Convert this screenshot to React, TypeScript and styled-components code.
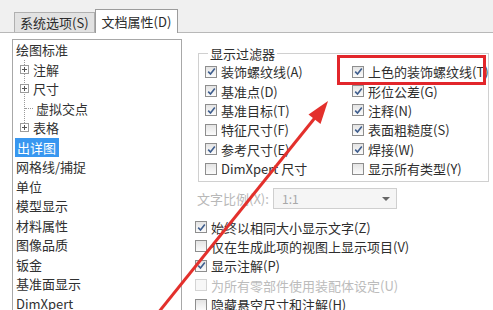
import React from "react";
import styled, { createGlobalStyle } from "styled-components";

const GlobalStyle = createGlobalStyle`
  html, body { margin: 0; padding: 0; background: #ffffff; }
  body {
    font-family: "Noto Sans CJK SC", "Noto Sans", "Liberation Sans", sans-serif;
    font-size: 13px;
    color: #303030;
    overflow: hidden;
  }
`;

const Page = styled.div`
  position: relative;
  width: 493px;
  height: 310px;
  overflow: hidden;
  background: #fff;
`;

const TabStrip = styled.div`
  height: 32px;
  background: #f0f0f0;
  border-bottom: 1px solid #b8b8b8;
  display: flex;
  align-items: flex-end;
  padding-left: 14px;
`;

const Tab = styled.div<{ $active?: boolean }>`
  display: flex;
  align-items: center;
  box-sizing: border-box;
  height: ${(p) => (p.$active ? "24px" : "20px")};
  padding: 0 ${(p) => (p.$active ? "6px" : "5px")};
  background: ${(p) => (p.$active ? "#ffffff" : "#e2e2e2")};
  border: 1px solid ${(p) => (p.$active ? "#9c9c9c" : "#b0b0b0")};
  border-bottom: none;
  margin-bottom: ${(p) => (p.$active ? "-1px" : "0")};
  line-height: 1;
  color: #2a2a2a;
  white-space: nowrap;
`;

const Body = styled.div`
  display: flex;
  align-items: flex-start;
`;

const Tree = styled.div`
  margin: 6px 0 0 12px;
  width: 170px;
  height: 300px;
  box-sizing: border-box;
  border: 1px solid #a8a8a8;
  padding: 0 0 0 2px;
  background: #fff;
  flex-shrink: 0;
`;

const TreeRow = styled.div`
  height: 19.5px;
  display: flex;
  align-items: center;
  white-space: nowrap;
`;

const Children = styled.div`
  margin-left: 9px;
  border-left: 1px dotted #9a9a9a;
  margin-bottom: 9px;
  height: 69px;
  overflow: visible;
`;

const ChildRow = styled.div`
  height: 19.5px;
  display: flex;
  align-items: center;
  white-space: nowrap;
`;

const Expander = styled.span`
  position: relative;
  width: 9px;
  height: 9px;
  box-sizing: border-box;
  border: 1px solid #9c9c9c;
  background: #fff;
  margin-left: -5px;
  margin-right: 4px;
  flex-shrink: 0;
  &::before {
    content: "";
    position: absolute;
    left: 1px;
    right: 1px;
    top: 3px;
    height: 1px;
    background: #555;
  }
  &::after {
    content: "";
    position: absolute;
    top: 1px;
    bottom: 1px;
    left: 3px;
    width: 1px;
    background: #555;
  }
`;

const Dash = styled.span`
  width: 8px;
  border-top: 1px dotted #9a9a9a;
  margin-right: 3px;
  flex-shrink: 0;
`;

const Selected = styled.span`
  background: #3897f0;
  color: #fff;
  padding: 0 3px 0 2px;
  line-height: 19px;
`;

const Plain = styled.span`
  padding-left: 1px;
`;

const Right = styled.div`
  margin-left: 15px;
  display: flex;
  flex-direction: column;
  flex: 1;
  min-width: 0;
`;

const Group = styled.fieldset`
  margin: 12px 0 0 1px;
  width: 291px;
  box-sizing: border-box;
  border: 1px solid #d0d0d0;
  padding: 0 0 3px 6px;
  min-width: 0;
`;

const Legend = styled.legend`
  padding: 0 2px;
  margin-left: 3px;
  line-height: 17px;
  color: #2e2e2e;
`;

const FilterGrid = styled.div`
  display: grid;
  grid-template-columns: 147px 200px;
`;

const Option = styled.label<{ $disabled?: boolean }>`
  height: 19.4px;
  display: flex;
  align-items: center;
  white-space: nowrap;
  color: ${(p) => (p.$disabled ? "#bcbcbc" : "#2e2e2e")};
`;

const Box = styled.span<{ $disabled?: boolean }>`
  width: 12px;
  height: 12px;
  box-sizing: border-box;
  border: 1px solid ${(p) => (p.$disabled ? "#d4d4d4" : "#8e8e8e")};
  background: ${(p) =>
    p.$disabled ? "#f7f7f7" : "linear-gradient(#e4e4e4, #fbfbfb)"};
  margin-right: 4px;
  flex-shrink: 0;
  display: flex;
  align-items: center;
  justify-content: center;
`;

const ScaleRow = styled.div`
  display: flex;
  align-items: center;
  margin-top: 6px;
  height: 21px;
`;

const ScaleLabel = styled.span`
  color: #b8b8b8;
  width: 76px;
  white-space: nowrap;
`;

const Select = styled.div`
  width: 124px;
  height: 21px;
  box-sizing: border-box;
  border: 1px solid #cfcfcf;
  background: #f5f5f5;
  display: flex;
  align-items: center;
  justify-content: space-between;
  padding: 0 6px 0 8px;
  color: #a8a8a8;
  font-size: 12px;
`;

const Caret = styled.span`
  width: 0;
  height: 0;
  border-left: 4px solid transparent;
  border-right: 4px solid transparent;
  border-top: 4px solid #666;
`;

const OptionList = styled.div`
  margin-top: 8px;
  margin-left: -2px;
  display: flex;
  flex-direction: column;
`;

const Overlay = styled.svg`
  position: absolute;
  left: 0;
  top: 0;
  pointer-events: none;
`;

const Highlight = styled.div`
  position: absolute;
  left: 337px;
  top: 55px;
  width: 149px;
  height: 30px;
  box-sizing: border-box;
  border: 3px solid #e2262b;
  pointer-events: none;
`;

const Check = () => (
  <svg width="9" height="9" viewBox="0 0 9 9">
    <path d="M1.2 4.6 L3.5 7 L7.8 1.5" fill="none" stroke="#3f5e8e" strokeWidth="1.6" />
  </svg>
);

const CheckOption: React.FC<{ label: string; checked?: boolean; disabled?: boolean }> = ({
  label,
  checked,
  disabled,
}) => (
  <Option $disabled={disabled}>
    <Box $disabled={disabled}>{checked ? <Check /> : null}</Box>
    {label}
  </Option>
);

const filters: [string, boolean][] = [
  ["装饰螺纹线(A)", true],
  ["上色的装饰螺纹线(T)", true],
  ["基准点(D)", true],
  ["形位公差(G)", true],
  ["基准目标(T)", true],
  ["注释(N)", true],
  ["特征尺寸(F)", false],
  ["表面粗糙度(S)", true],
  ["参考尺寸(E)", true],
  ["焊接(W)", true],
  ["DimXpert 尺寸", false],
  ["显示所有类型(Y)", false],
];

const bottomItems = ["网格线/捕捉", "单位", "模型显示", "材料属性", "图像品质", "钣金", "基准面显示", "DimXpert"];

export default function App() {
  return (
    <Page>
      <GlobalStyle />
      <TabStrip>
        <Tab>系统选项(S)</Tab>
        <Tab $active>文档属性(D)</Tab>
      </TabStrip>
      <Body>
        <Tree>
          <TreeRow>
            <Plain>绘图标准</Plain>
          </TreeRow>
          <Children>
            <ChildRow>
              <Expander />
              注解
            </ChildRow>
            <ChildRow>
              <Expander />
              尺寸
            </ChildRow>
            <ChildRow>
              <Dash />
              虚拟交点
            </ChildRow>
            <ChildRow>
              <Expander />
              表格
            </ChildRow>
          </Children>
          <TreeRow>
            <Selected>出详图</Selected>
          </TreeRow>
          {bottomItems.map((t) => (
            <TreeRow key={t}>
              <Plain>{t}</Plain>
            </TreeRow>
          ))}
        </Tree>
        <Right>
          <Group>
            <Legend>显示过滤器</Legend>
            <FilterGrid>
              {filters.map(([label, checked]) => (
                <CheckOption key={label} label={label} checked={checked} />
              ))}
            </FilterGrid>
          </Group>
          <ScaleRow>
            <ScaleLabel>文字比例(X):</ScaleLabel>
            <Select>
              <span>1:1</span>
              <Caret />
            </Select>
          </ScaleRow>
          <OptionList>
            <CheckOption label="始终以相同大小显示文字(Z)" checked />
            <CheckOption label="仅在生成此项的视图上显示项目(V)" />
            <CheckOption label="显示注解(P)" checked />
            <CheckOption label="为所有零部件使用装配体设定(U)" disabled />
            <CheckOption label="隐藏悬空尺寸和注解(H)" />
          </OptionList>
        </Right>
      </Body>
      <Highlight />
      <Overlay width="493" height="310" viewBox="0 0 493 310">
        <line x1="158" y1="313" x2="318" y2="114" stroke="#e3302c" strokeWidth="3" />
        <polygon points="328,101 320.5,124 308.5,114.5" fill="#e3302c" />
      </Overlay>
    </Page>
  );
}
